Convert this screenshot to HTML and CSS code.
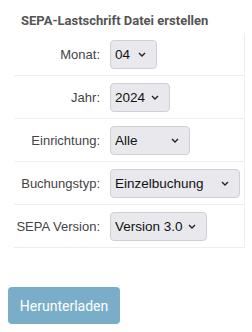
FILE: index.html
```html
<!DOCTYPE html>
<html lang="de">
<head>
    <meta charset="UTF-8">
    <title>SEPA-Lastschrift</title>
    <link rel="stylesheet" href="styles.css">
</head>
<body>
    <div class="panel">
        <h3 class="panel-title">SEPA-Lastschrift Datei erstellen</h3>
        <table class="form-table">
            <tr>
                <td class="label">Monat:</td>
                <td><span class="select-wrap"><select class="w-month"><option>04</option></select><svg class="chev" width="8" height="5" viewBox="0 0 8 5"><path d="M1 1l3 3 3-3" fill="none" stroke="#222" stroke-width="1.4"/></svg></span></td>
            </tr>
            <tr>
                <td class="label">Jahr:</td>
                <td><span class="select-wrap"><select class="w-year"><option>2024</option></select><svg class="chev" width="8" height="5" viewBox="0 0 8 5"><path d="M1 1l3 3 3-3" fill="none" stroke="#222" stroke-width="1.4"/></svg></span></td>
            </tr>
            <tr>
                <td class="label">Einrichtung:</td>
                <td><span class="select-wrap"><select class="w-inst"><option>Alle</option></select><svg class="chev" width="8" height="5" viewBox="0 0 8 5"><path d="M1 1l3 3 3-3" fill="none" stroke="#222" stroke-width="1.4"/></svg></span></td>
            </tr>
            <tr>
                <td class="label">Buchungstyp:</td>
                <td><span class="select-wrap"><select class="w-type"><option>Einzelbuchung</option></select><svg class="chev" width="8" height="5" viewBox="0 0 8 5"><path d="M1 1l3 3 3-3" fill="none" stroke="#222" stroke-width="1.4"/></svg></span></td>
            </tr>
            <tr>
                <td class="label">SEPA Version:</td>
                <td><span class="select-wrap"><select class="w-version"><option>Version 3.0</option></select><svg class="chev" width="8" height="5" viewBox="0 0 8 5"><path d="M1 1l3 3 3-3" fill="none" stroke="#222" stroke-width="1.4"/></svg></span></td>
            </tr>
        </table>
    </div>
    <button class="btn-download" disabled>Herunterladen</button>
</body>
</html>
```
FILE: styles.css
```css
body {
    margin: 0;
    padding: 0 8px;
    font-family: "Liberation Sans", Arial, sans-serif;
    background: #fff;
}
.panel {
    padding-left: 6px;
    width: 231px;
}
.panel-title {
    margin: 0;
    padding: 13px 0 0 7px;
    height: 20px;
    font-family: Roboto, sans-serif;
    font-size: 13px;
    font-weight: bold;
    color: #555;
}
.form-table {
    width: 100%;
    border-collapse: collapse;
    border-right: 1px solid #eee;
}
.form-table td {
    height: 42px;
    padding: 0;
    border-bottom: 1px solid #eee;
    vertical-align: middle;
}
.form-table td.label {
    width: 86px;
    padding-right: 10px;
    text-align: right;
    font-size: 13px;
    color: #444;
}
.select-wrap {
    position: relative;
    display: inline-block;
    vertical-align: middle;
}
.select-wrap select {
    appearance: none;
    -webkit-appearance: none;
    height: 29px;
    padding: 0 0 0 4px;
    border: 1px solid #cfcfd8;
    border-radius: 4px;
    background: #e9e9ed;
    color: #111;
    font-family: "Liberation Sans", Arial, sans-serif;
    font-size: 13.5px;
    box-sizing: border-box;
}
.select-wrap .chev {
    position: absolute;
    right: 11px;
    top: 12px;
    pointer-events: none;
}
.w-month { width: 47px; }
.w-year { width: 60px; }
.w-inst { width: 80px; }
.w-type { width: 130px; }
.w-version { width: 97px; }
.btn-download {
    margin-top: 39px;
    width: 112px;
    height: 37px;
    border: none;
    border-radius: 4px;
    background: #7aaec8;
    color: #fff;
    font-family: Roboto, sans-serif;
    font-size: 14px;
}
```
